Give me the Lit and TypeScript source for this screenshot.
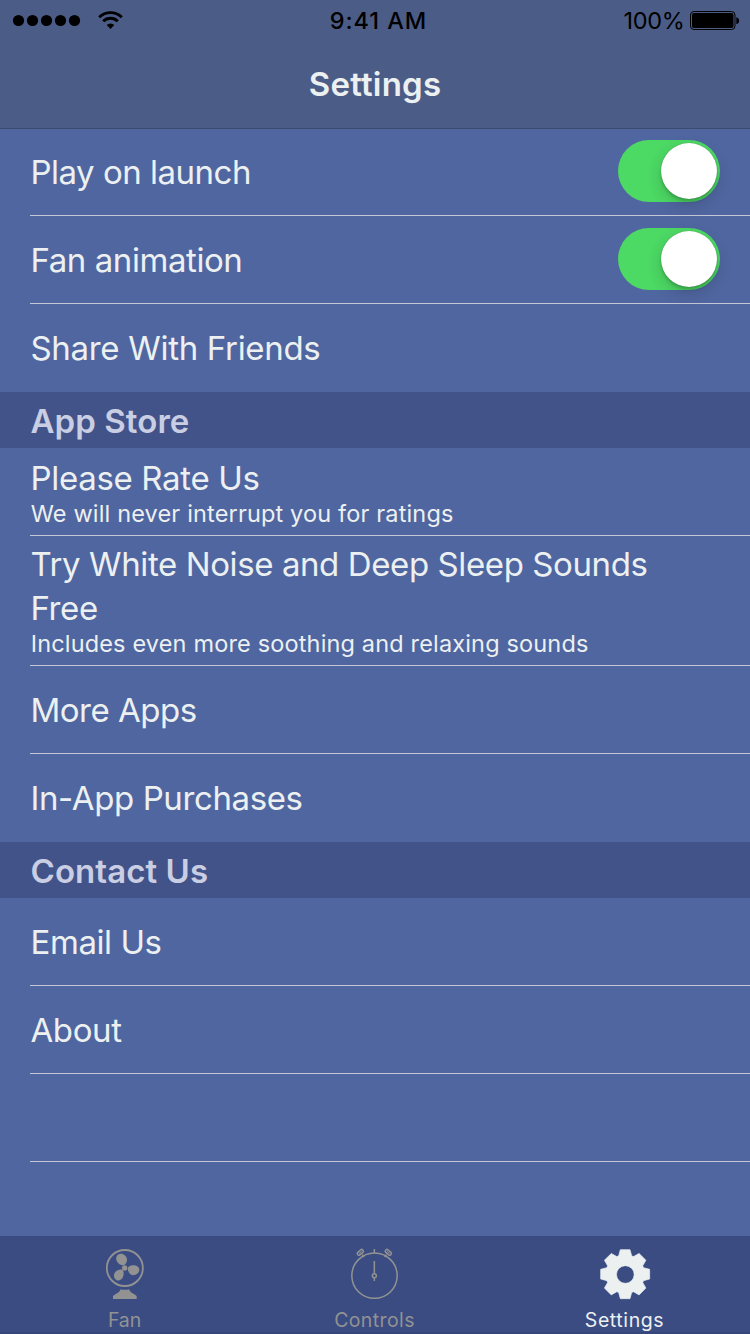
import { LitElement, html, svg, css, nothing } from "lit";
import { customElement, property } from "lit/decorators.js";
import { styleMap } from "lit/directives/style-map.js";

interface Item {
  title: string;
  track?: number;
  subtitle?: string;
  toggle?: boolean;
}

interface Section {
  heading?: string;
  items: Item[];
}

const SECTIONS: Section[] = [
  {
    items: [
      { title: "Play on launch", track: -0.5, toggle: true },
      { title: "Fan animation", track: -0.43, toggle: true },
      { title: "Share With Friends", track: -0.31 },
    ],
  },
  {
    heading: "App Store",
    items: [
      { title: "Please Rate Us", track: -0.32, subtitle: "We will never interrupt you for ratings" },
      {
        title: "Try White Noise and Deep Sleep Sounds Free",
        track: -0.4,
        subtitle: "Includes even more soothing and relaxing sounds",
      },
      { title: "More Apps", track: -0.5 },
      { title: "In-App Purchases", track: -0.39 },
    ],
  },
  {
    heading: "Contact Us",
    items: [{ title: "Email Us", track: -0.43 }, { title: "About", track: -0.4 }, { title: "" }],
  },
];

/** Outline of an eight-toothed gear centred on (cx, cy). */
function gearPath(cx: number, cy: number): string {
  const profile = [
    [-19.5, 55],
    [-14.5, 73.5],
    [14.5, 73.5],
    [19.5, 55],
  ];
  const pts: string[] = [];
  for (let i = 0; i < 8; i++) {
    const a = (i * Math.PI) / 4;
    for (const [x, r] of profile) {
      const px = cx + x * Math.cos(a) + r * Math.sin(a);
      const py = cy + x * Math.sin(a) - r * Math.cos(a);
      pts.push(`${px.toFixed(2)} ${py.toFixed(2)}`);
    }
  }
  return `M${pts.join("L")}Z`;
}

const fanIcon = svg`
  <circle cx="134.5" cy="129" r="54" fill="none" stroke="currentColor" stroke-width="5.5"/>
  <circle cx="134" cy="129" r="8" fill="currentColor"/>
  <path fill="currentColor" d="M133 120C124 123 112 116 109 105C107 95 113 86.500 122 86.500C132 86.500 140 94 141 103C141.500 110 138 117 133 120Z"/>
  <path fill="currentColor" d="M143.500 134C141 127 149 120.500 160 120.500C171 120.500 178.500 127 178 135C177 144 168 151 159 150.500C151 150 145 142 143.500 134Z"/>
  <path fill="currentColor" d="M127 134.500C132 138 132 149 129 156C126 164 117 168 110 165.500C103 162.500 100.500 154 102.500 147C106 137 119 130.500 127 134.500Z"/>
  <path fill="currentColor" d="M122 193Q134 196 147 193C149 200 156 204 163 208L170 213V222H99V213L106 208C113 204 120 200 122 193Z"/>`;

const stopwatchIcon = svg`
  <g fill="none" stroke="currentColor" stroke-width="4.500">
    <circle cx="163.500" cy="152" r="68"/>
    <path d="M163 72V85M163 108V145M163 158V168M127 89L132 96M199 89L194 96"/>
    <circle cx="163" cy="152" r="6"/>
    <rect x="111" y="77" width="20" height="10" rx="4" transform="rotate(-40 121 82)"/>
    <rect x="195" y="77" width="20" height="10" rx="4" transform="rotate(40 205 82)"/>
    <path stroke-width="3" d="M117 85L125 79M209 85L201 79"/>
  </g>`;

const gearIcon = svg`
  <path fill="currentColor" stroke="currentColor" stroke-width="2" stroke-linejoin="round" fill-rule="evenodd"
    d="${gearPath(165.5, 147.5)}M192.500 148.500a26.500 26.500 0 1 0 -53 0a26.500 26.500 0 1 0 53 0Z"/>`;

const TABS = [
  { label: "Fan", icon: fanIcon, box: "54 66 162 162", track: -0.1, active: false },
  { label: "Controls", icon: stopwatchIcon, box: "84 66 162 162", track: 0.39, active: false },
  { label: "Settings", icon: gearIcon, box: "84 66 162 162", track: 0.59, active: true },
];

@customElement("status-bar")
class StatusBar extends LitElement {
  static styles = css`
    :host {
      display: grid;
      grid-template-columns: 1fr auto 1fr;
      align-items: center;
      height: 41px;
      padding: 0 10px 0 12px;
      color: #000;
      font-size: 23.5px;
      line-height: 41px;
    }
    .signal {
      display: block;
    }
    .time {
      font-weight: 500;
      letter-spacing: 0.95px;
      padding-left: 5px;
    }
    .power {
      display: flex;
      justify-content: flex-end;
      align-items: center;
      gap: 4.5px;
      letter-spacing: -0.3px;
    }
  `;
  render() {
    return html`
      <svg class="signal" width="116" height="41" viewBox="12 0 116 41">
        ${[0, 1, 2, 3, 4].map((i) => svg`<circle cx=${18.5 + i * 14} cy="20.5" r="5.6"/>`)}
        <g fill="none" stroke="#000" stroke-width="2.8">
          <path d="M99.2 17.2A16 16 0 0 1 121.8 17.2"/>
          <path d="M103.2 21.3A10.300 10.300 0 0 1 117.800 21.300"/>
        </g>
        <path d="M110.500 29L106.700 25.100A5.400 5.400 0 0 1 114.300 25.100Z"/>
      </svg>
      <span class="time">9:41 AM</span>
      <span class="power">
        <span>100%</span>
        <svg width="51" height="41" viewBox="689 0 51 41">
          <rect x="690.500" y="11.500" width="44.500" height="18" rx="3.500" fill="none" stroke="#000"/>
          <rect x="692" y="13" width="41.500" height="15" rx="2"/>
          <path d="M736.300 17.300C740 18 740 23.600 736.300 24.300Z"/>
        </svg>
      </span>
    `;
  }
}

@customElement("toggle-switch")
class ToggleSwitch extends LitElement {
  static styles = css`
    :host {
      display: flex;
      justify-content: flex-end;
      width: 102px;
      height: 62px;
      padding: 3px;
      box-sizing: border-box;
      border-radius: 31px;
      background: #4cd964;
    }
    .knob {
      width: 56px;
      height: 56px;
      border-radius: 50%;
      background: #fff;
      box-shadow: 0 6px 16px rgba(0, 0, 0, 0.16), 0 3px 3px rgba(0, 0, 0, 0.14), 0 0 1px rgba(0, 0, 0, 0.4);
    }
  `;
  render() {
    return html`<div class="knob"></div>`;
  }
}

@customElement("settings-row")
class SettingsRow extends LitElement {
  @property({ attribute: false }) item!: Item;
  @property({ type: Boolean }) last = false;

  static styles = css`
    .row {
      display: flex;
      align-items: center;
      justify-content: space-between;
      box-sizing: border-box;
      min-height: 88px;
      margin-left: 30px;
      padding: 1px 30px 0 0;
      border-bottom: 1px solid #c3c6d6;
    }
    .row.detailed {
      align-items: flex-start;
      padding: 7.5px 70px 7.5px 0;
    }
    .row.wrapped {
      padding-top: 6px;
      padding-bottom: 8px;
    }
    .row.last {
      border-bottom-color: transparent;
    }
    .title {
      padding-left: 0.5px;
      font-size: 33px;
      line-height: 44px;
      min-height: 44px;
    }
    .subtitle {
      font-size: 23.5px;
      line-height: 27px;
      letter-spacing: 0.16px;
      padding-left: 0.7px;
      white-space: nowrap;
    }
    toggle-switch {
      margin-top: -2px;
    }
  `;
  render() {
    const { title, track = 0, subtitle, toggle } = this.item;
    const cls = ["row", subtitle ? "detailed" : "", title.length > 36 ? "wrapped" : "", this.last ? "last" : ""].join(" ");
    return html`
      <div class=${cls}>
        <div>
          <div class="title" style=${styleMap({ letterSpacing: `${track}px` })}>${title}</div>
          ${subtitle ? html`<div class="subtitle">${subtitle}</div>` : nothing}
        </div>
        ${toggle ? html`<toggle-switch></toggle-switch>` : nothing}
      </div>
    `;
  }
}

@customElement("tab-bar")
class TabBar extends LitElement {
  static styles = css`
    :host {
      display: grid;
      grid-template-columns: repeat(3, 1fr);
      box-sizing: border-box;
      height: 98px;
      padding-top: 11px;
      background: #3a4c82;
      border-bottom: 2px solid #36477c;
    }
    .tab {
      display: flex;
      flex-direction: column;
      align-items: center;
      gap: 7px;
      color: #929292;
    }
    .tab.active {
      color: #ecf0f1;
    }
    .label {
      font-size: 19.5px;
      line-height: 24px;
      margin-right: 1px;
    }
  `;
  render() {
    return html`${TABS.map(
      (t) => html`
        <div class="tab ${t.active ? "active" : ""}">
          <svg width="54" height="54" viewBox=${t.box}>${t.icon}</svg>
          <span class="label" style=${styleMap({ letterSpacing: `${t.track}px` })}>${t.label}</span>
        </div>
      `
    )}`;
  }
}

@customElement("app-root")
class AppRoot extends LitElement {
  static styles = css`
    :host {
      display: flex;
      flex-direction: column;
      width: 750px;
      height: 1334px;
      overflow: hidden;
      background: #5066a0;
      color: #ecf0f1;
      font-family: Inter, "Liberation Sans", sans-serif;
    }
    .nav {
      flex: none;
      height: 128px;
      background: #4b5c87;
      box-shadow: 0 1px 0 #3d4a70;
      z-index: 1;
    }
    .nav-title {
      margin: 0;
      text-align: center;
      font-size: 33px;
      font-weight: 600;
      line-height: 86px;
      letter-spacing: 0.2px;
    }
    .list {
      flex: 1;
      min-height: 0;
    }
    .heading {
      box-sizing: border-box;
      height: 56px;
      margin: 0;
      padding: 2px 0 0 30.5px;
      background: #42538a;
      color: #c9cee3;
      font-size: 33px;
      font-weight: 600;
      line-height: 54px;
      letter-spacing: 0.07px;
    }
  `;
  render() {
    return html`
      <header class="nav">
        <status-bar></status-bar>
        <h1 class="nav-title">Settings</h1>
      </header>
      <main class="list">
        ${SECTIONS.map(
          (s, n) => html`
            ${s.heading ? html`<h2 class="heading">${s.heading}</h2>` : nothing}
            ${s.items.map(
              (item, i) => html`<settings-row
                .item=${item}
                ?last=${n < SECTIONS.length - 1 && i === s.items.length - 1}
              ></settings-row>`
            )}
          `
        )}
      </main>
      <tab-bar></tab-bar>
    `;
  }
}
